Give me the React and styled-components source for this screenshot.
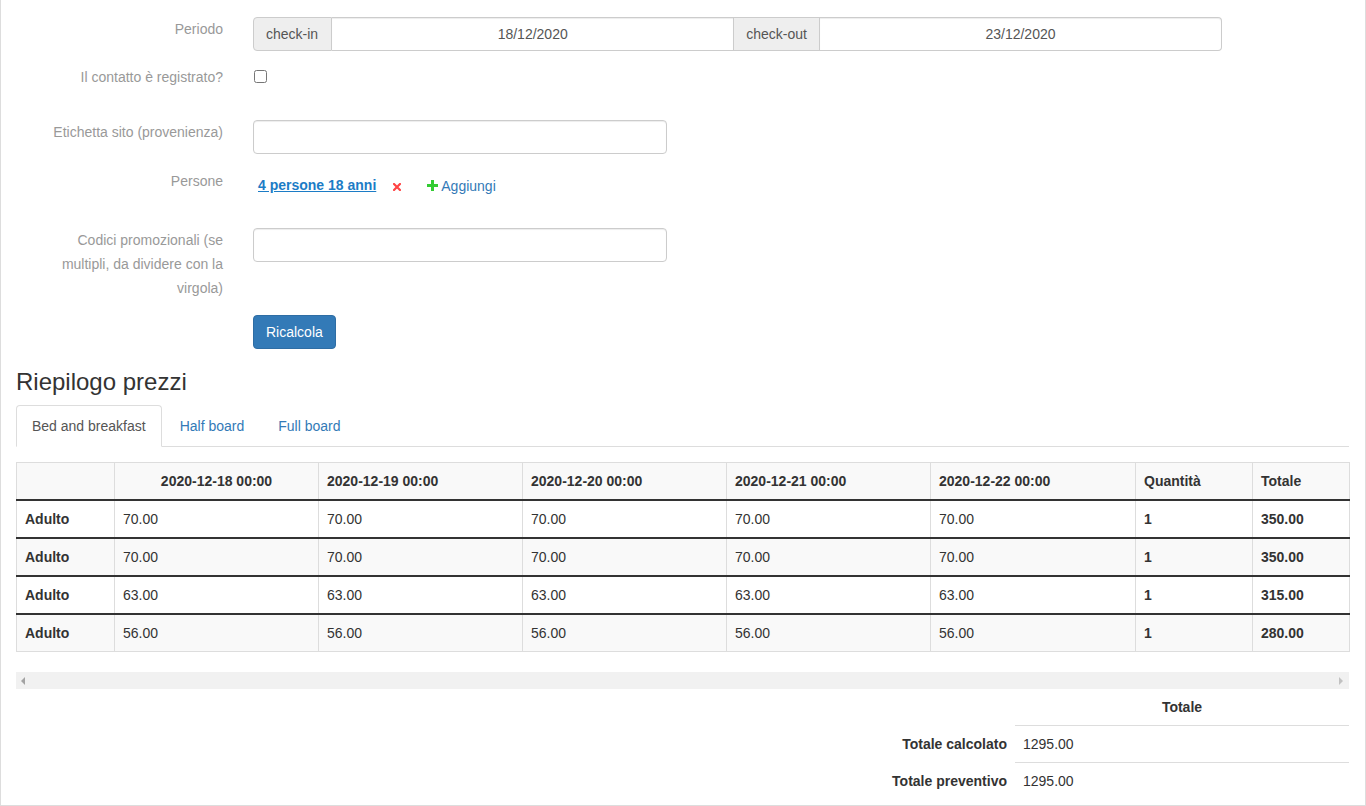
import React from "react";
import styled, { createGlobalStyle, css } from "styled-components";

const Global = createGlobalStyle`
  html, body { margin: 0; padding: 0; background: #fff; }
  body {
    font-family: "Liberation Sans", Arial, Helvetica, sans-serif;
    font-size: 14px;
    color: #333;
    line-height: 20px;
  }
  * { box-sizing: border-box; }
`;

const Panel = styled.div`
  border: 1px solid #ddd;
  border-top: none;
  padding: 17px 16px 5px 15px;
  min-height: 806px;
`;

const FormGroup = styled.div`
  display: grid;
  grid-template-columns: 207px 1fr;
  column-gap: 30px;
  margin-bottom: ${(p) => (p.$mb != null ? p.$mb : 15)}px;
  min-height: ${(p) => p.$h || 0}px;
`;

const Label = styled.label`
  text-align: right;
  padding-left: 17px;
  line-height: 24px;
  color: #999;
`;

const Field = styled.div`
  display: flex;
  align-items: flex-start;
  padding-top: ${(p) => p.$pt || 0}px;
`;

const InputGroup = styled.div`
  display: flex;
  width: 969px;
  height: 34px;
`;

const Addon = styled.span`
  display: flex;
  align-items: center;
  padding: 6px 12px;
  background: #eee;
  border: 1px solid #ccc;
  color: #555;
  ${(p) =>
    p.$first
      ? css`border-radius: 4px 0 0 4px; padding-right: 13px;`
      : css`border-left: none;`}
`;

const GroupInput = styled.input`
  flex: 1;
  min-width: 0;
  height: 34px;
  border: 1px solid #ccc;
  border-left: none;
  padding: 6px 12px;
  font: inherit;
  color: #555;
  text-align: center;
  box-shadow: inset 0 1px 1px rgba(0, 0, 0, 0.075);
  ${(p) => p.$last && css`border-radius: 0 4px 4px 0;`}
`;

const TextInput = styled.input`
  width: 414px;
  height: 34px;
  border: 1px solid #ccc;
  border-radius: 4px;
  padding: 6px 12px;
  font: inherit;
  color: #555;
  box-shadow: inset 0 1px 1px rgba(0, 0, 0, 0.075);
`;

const Check = styled.input`
  width: 13px;
  height: 13px;
  margin: 5px 0 0 1px;
`;

const PersonLink = styled.a`
  margin-left: 5px;
  font-weight: bold;
  color: #1c7cc6;
  text-decoration: underline;
  cursor: pointer;
`;

const IconButton = styled.span`
  display: inline-flex;
  align-items: center;
  height: 20px;
  margin-left: ${(p) => p.$ml || 0}px;
  padding-top: ${(p) => p.$pt || 0}px;
`;

const AddLink = styled.a`
  color: #337ab7;
  margin-left: 3px;
  margin-top: 1px;
  cursor: pointer;
`;

const Button = styled.button`
  height: 34px;
  padding: 6px 12px;
  font: inherit;
  color: #fff;
  background: #337ab7;
  border: 1px solid #2e6da4;
  border-radius: 4px;
`;

const Heading = styled.h3`
  font-size: 24px;
  font-weight: 500;
  line-height: 26.4px;
  margin: 20px 0 10px 0;
  color: #333;
`;

const Tabs = styled.ul`
  display: flex;
  list-style: none;
  margin: 0;
  padding: 0;
  border-bottom: 1px solid #ddd;
`;

const Tab = styled.li`
  margin-right: 2px;
  margin-bottom: -1px;
  padding: 10px 15px;
  line-height: 20px;
  border: 1px solid transparent;
  border-radius: 4px 4px 0 0;
  color: #337ab7;
  cursor: pointer;
  ${(p) =>
    p.$active &&
    css`
      color: #555;
      background: #fff;
      border-color: #ddd;
      border-bottom-color: #fff;
    `}
`;

const TabContent = styled.div`
  padding-top: 15px;
`;

const PriceTable = styled.table`
  width: 100%;
  table-layout: fixed;
  border-collapse: collapse;
  border: 1px solid #ddd;
  margin-bottom: 20px;
`;

const Th = styled.th`
  padding: 8px;
  line-height: 20px;
  border: 1px solid #ddd;
  background: #f9f9f9;
  text-align: ${(p) => p.$align || "left"};
  font-weight: bold;
  vertical-align: bottom;
`;

const Row = styled.tr`
  background: ${(p) => (p.$striped ? "#f9f9f9" : "#fff")};
`;

const Td = styled.td`
  padding: 8px;
  line-height: 20px;
  border: 1px solid #ddd;
  border-top: 2px solid #333;
  font-weight: ${(p) => (p.$bold ? "bold" : "normal")};
`;

const FakeScroll = styled.div`
  height: 17px;
  background: #f1f1f1;
  display: flex;
  align-items: center;
  justify-content: space-between;
  padding: 0 6px 0 5px;
`;

const Arrow = styled.span`
  width: 0;
  height: 0;
  border-top: 4px solid transparent;
  border-bottom: 4px solid transparent;
  ${(p) =>
    p.$dir === "left"
      ? css`border-right: 4px solid #a3a3a3;`
      : css`border-left: 4px solid #c1c1c1;`}
`;

const SummaryTable = styled.table`
  width: 100%;
  border-collapse: collapse;
`;

const SumHead = styled.th`
  padding: 8px;
  line-height: 20px;
  text-align: center;
  font-weight: bold;
  ${(p) => p.$line && css`border-bottom: 1px solid #ddd;`}
`;

const SumLabel = styled.th`
  padding: 8px;
  line-height: 20px;
  text-align: right;
  font-weight: bold;
`;

const SumValue = styled.td`
  padding: 8px;
  line-height: 20px;
  border-top: 1px solid #ddd;
`;

const dates = [
  "2020-12-18 00:00",
  "2020-12-19 00:00",
  "2020-12-20 00:00",
  "2020-12-21 00:00",
  "2020-12-22 00:00",
];

const rows = [
  { price: "70.00", total: "350.00" },
  { price: "70.00", total: "350.00" },
  { price: "63.00", total: "315.00" },
  { price: "56.00", total: "280.00" },
];

const colWidths = [98, 204, 204, 204, 204, 205, 117, 97];

export default function App() {
  return (
    <>
      <Global />
      <Panel>
        <FormGroup $mb={14}>
          <Label>Periodo</Label>
          <Field>
            <InputGroup>
              <Addon $first>check-in</Addon>
              <GroupInput defaultValue="18/12/2020" />
              <Addon>check-out</Addon>
              <GroupInput $last defaultValue="23/12/2020" />
            </InputGroup>
          </Field>
        </FormGroup>

        <FormGroup $h={40}>
          <Label>Il contatto è registrato?</Label>
          <Field>
            <Check type="checkbox" />
          </Field>
        </FormGroup>

        <FormGroup>
          <Label>Etichetta sito (provenienza)</Label>
          <Field>
            <TextInput />
          </Field>
        </FormGroup>

        <FormGroup $h={44}>
          <Label>Persone</Label>
          <Field $pt={6}>
            <PersonLink>4 persone 18 anni</PersonLink>
            <IconButton $ml={17} $pt={3}>
              <svg width="8" height="8" viewBox="0 0 8 8">
                <path d="M1 1 L7 7 M7 1 L1 7" stroke="#f44" strokeWidth="2.2" strokeLinecap="square" />
              </svg>
            </IconButton>
            <IconButton $ml={26}>
              <svg width="11" height="11" viewBox="0 0 11 11">
                <path d="M4 0 H7 V4 H11 V7 H7 V11 H4 V7 H0 V4 H4 Z" fill="#3c3" />
              </svg>
            </IconButton>
            <AddLink>Aggiungi</AddLink>
          </Field>
        </FormGroup>

        <FormGroup>
          <Label>Codici promozionali (se multipli, da dividere con la virgola)</Label>
          <Field>
            <TextInput />
          </Field>
        </FormGroup>

        <FormGroup $mb={0}>
          <span />
          <Field>
            <Button>Ricalcola</Button>
          </Field>
        </FormGroup>

        <Heading>Riepilogo prezzi</Heading>

        <Tabs>
          <Tab $active>Bed and breakfast</Tab>
          <Tab>Half board</Tab>
          <Tab>Full board</Tab>
        </Tabs>

        <TabContent>
          <PriceTable>
            <colgroup>
              {colWidths.map((w, i) => (
                <col key={i} style={{ width: w }} />
              ))}
            </colgroup>
            <thead>
              <tr>
                <Th />
                {dates.map((d, i) => (
                  <Th key={d} $align={i === 0 ? "center" : "left"}>
                    {d}
                  </Th>
                ))}
                <Th>Quantità</Th>
                <Th>Totale</Th>
              </tr>
            </thead>
            <tbody>
              {rows.map((r, i) => (
                <Row key={i} $striped={i % 2 === 1}>
                  <Td $bold>Adulto</Td>
                  {dates.map((d) => (
                    <Td key={d}>{r.price}</Td>
                  ))}
                  <Td $bold>1</Td>
                  <Td $bold>{r.total}</Td>
                </Row>
              ))}
            </tbody>
          </PriceTable>

          <FakeScroll>
            <Arrow $dir="left" />
            <Arrow $dir="right" />
          </FakeScroll>

          <SummaryTable>
            <colgroup>
              <col />
              <col style={{ width: 334 }} />
            </colgroup>
            <thead>
              <tr>
                <SumHead />
                <SumHead $line>Totale</SumHead>
              </tr>
            </thead>
            <tbody>
              <tr>
                <SumLabel>Totale calcolato</SumLabel>
                <SumValue>1295.00</SumValue>
              </tr>
              <tr>
                <SumLabel>Totale preventivo</SumLabel>
                <SumValue>1295.00</SumValue>
              </tr>
            </tbody>
          </SummaryTable>
        </TabContent>
      </Panel>
    </>
  );
}
